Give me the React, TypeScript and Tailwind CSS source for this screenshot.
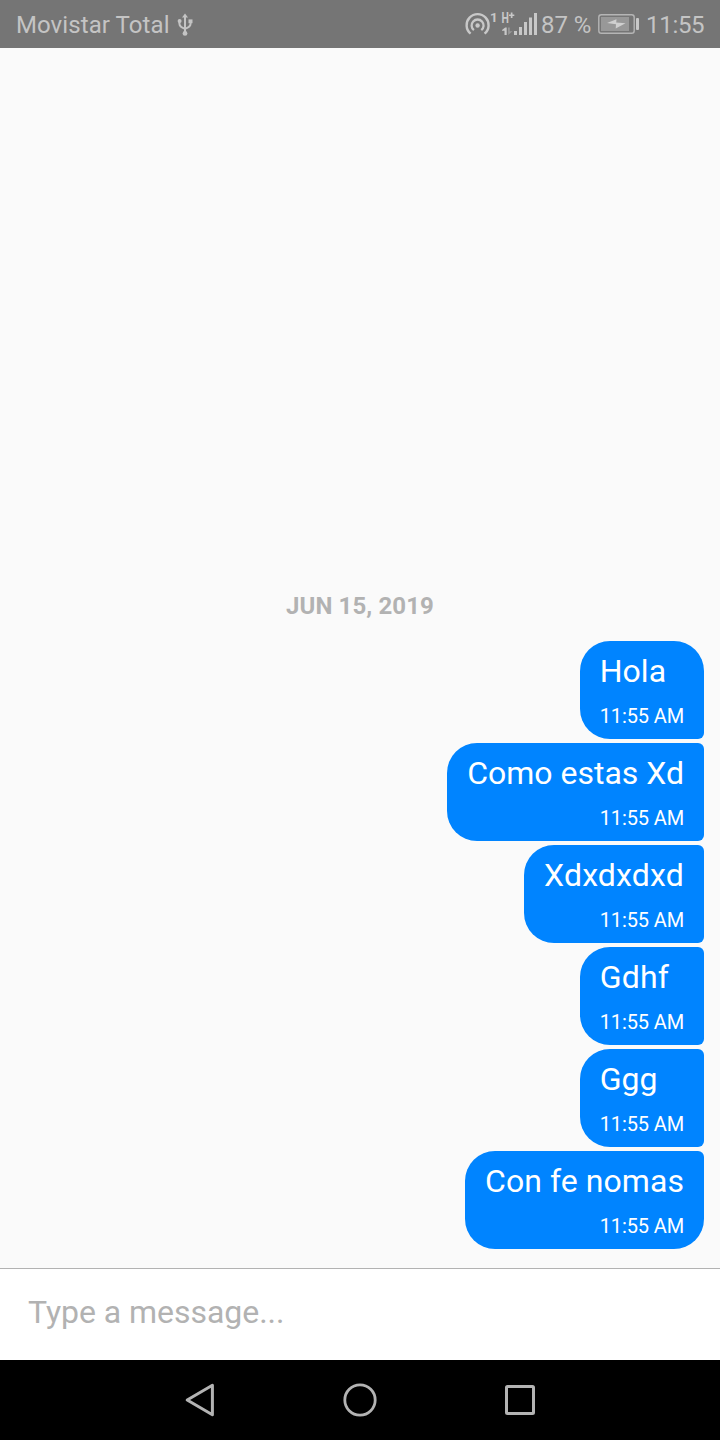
import React from "react";

type Message = { text: string; time: string; tracking: string };

const messages: Message[] = [
  { text: "Hola", time: "11:55 AM", tracking: "tracking-[0.06px]" },
  { text: "Como estas Xd", time: "11:55 AM", tracking: "tracking-[0px]" },
  { text: "Xdxdxdxd", time: "11:55 AM", tracking: "tracking-[0.17px]" },
  { text: "Gdhf", time: "11:55 AM", tracking: "tracking-[0.2px]" },
  { text: "Ggg", time: "11:55 AM", tracking: "tracking-[0.06px]" },
  { text: "Con fe nomas", time: "11:55 AM", tracking: "tracking-[0.06px]" },
];

function UsbIcon() {
  return (
    <svg className="ml-[7px] h-6 w-4" viewBox="0 0 16 24" fill="none" stroke="#c4c4c4" strokeWidth="2">
      <path d="M8 4v16M2.4 9v2.5c0 2.8 1.6 4 5.6 5.2 4-1.2 5.6-2.4 5.6-5.2V9" />
      <path d="M8 1.4l3 4.2H5z" fill="#c4c4c4" stroke="none" />
      <circle cx="2.6" cy="9" r="2" fill="#c4c4c4" stroke="none" />
      <rect x="11.5" y="7.4" width="4" height="3.8" fill="#c4c4c4" stroke="none" />
      <circle cx="8" cy="21.4" r="2.4" fill="#c4c4c4" stroke="none" />
    </svg>
  );
}

function SignalIcons() {
  return (
    <svg className="h-12 w-[78px] shrink-0" viewBox="462 0 78 48" fill="none" stroke="#c8c8c8">
      <path d="M470.6 33.6a11 11 0 1 1 14 0" strokeWidth="2.4" />
      <path d="M473.9 30.2a6 6 0 1 1 7.4 0" strokeWidth="2.3" />
      <circle cx="477.6" cy="25.5" r="2.2" fill="#c8c8c8" stroke="none" />
      <g fill="#c8c8c8" stroke="none" className="font-[Roboto,sans-serif]">
        <text x="490" y="22" fontSize="13.5" fontWeight="700">1</text>
        <text x="501.6" y="23" fontSize="14" fontWeight="700" textLength="7.4" lengthAdjust="spacingAndGlyphs">H</text>
        <path d="M509 14.4h1.8v-1.9h1.7v1.9h1.8V16h-1.8v1.9h-1.7V16H509z" />
        <path d="M502 30l3.2-2.6h1.5V35h-2.2v-4.2H502z" />
        <path d="M508 27.5h1.8v3.8h2.7L508.2 35z" fill="#999" />
        <rect x="514" y="31" width="3" height="4" />
        <rect x="519" y="27" width="3" height="8" />
        <rect x="524" y="22" width="3" height="13" />
        <rect x="529" y="17.5" width="3" height="17.5" />
        <rect x="534" y="13" width="3" height="22" />
      </g>
    </svg>
  );
}

function BatteryIcon() {
  return (
    <svg className="ml-[6px] h-12 w-[42px] shrink-0" viewBox="598 0 42 48">
      <rect x="598.8" y="14.7" width="35.4" height="18.6" rx="2.6" fill="none" stroke="#b5b5b5" strokeWidth="1.4" />
      <rect x="601" y="17" width="28" height="14" fill="#989898" />
      <path d="M607 23l9.5-3.8-.3 3.4 9.3.6-9.8 5.2.3-4.2z" fill="#d0d0d0" />
      <rect x="636" y="18" width="3" height="12" rx="1" fill="#c8c8c8" />
    </svg>
  );
}

function StatusBar() {
  return (
    <header className="flex h-12 items-center justify-between bg-[#757575] pl-4 text-2xl text-[#c4c4c4]">
      <div className="flex items-center">
        <span className="pt-0.5 tracking-[0.08px]">Movistar Total</span>
        <UsbIcon />
      </div>
      <div className="flex w-[258px] items-center whitespace-nowrap">
        <SignalIcons />
        <span className="w-[52px] shrink-0 pl-px pt-0.5 tracking-[-0.05px]">87 %</span>
        <BatteryIcon />
        <span className="ml-[6px] pt-0.5 tracking-[-0.3px]">11:55</span>
      </div>
    </header>
  );
}

function Bubble({ message, first, last }: { message: Message; first: boolean; last: boolean }) {
  const top = first ? "rounded-tr-[30px]" : "rounded-tr-[6px]";
  const bottom = last ? "rounded-br-[30px]" : "rounded-br-[6px]";
  return (
    <li className={`flex h-[98px] flex-col rounded-l-[30px] bg-[#0084ff] px-5 pt-2.5 text-white ${top} ${bottom}`}>
      <span className={`text-[32px] leading-10 ${message.tracking}`}>{message.text}</span>
      <time className="mt-[13px] self-end text-xl leading-6 tracking-[-0.12px]">{message.time}</time>
    </li>
  );
}

function NavigationBar() {
  return (
    <nav className="flex h-20 items-center justify-center gap-[120px] bg-black">
      <svg className="size-10" viewBox="0 0 40 40" fill="none" stroke="#b3b3b3" strokeWidth="3" strokeLinejoin="round">
        <path d="M7.2 20L32.4 5.2v29.6z" />
      </svg>
      <svg className="size-10" viewBox="0 0 40 40" fill="none" stroke="#b3b3b3" strokeWidth="2.8">
        <circle cx="20" cy="20" r="15.2" />
      </svg>
      <svg className="size-10" viewBox="0 0 40 40" fill="none" stroke="#b3b3b3" strokeWidth="3">
        <rect x="6.5" y="6.5" width="27" height="27" rx="1" />
      </svg>
    </nav>
  );
}

export default function App() {
  return (
    <div className="flex h-[1440px] w-[720px] flex-col overflow-hidden bg-[#fafafa] font-[Roboto,sans-serif]">
      <StatusBar />
      <main className="flex flex-1 flex-col justify-end pb-[19px]">
        <h2 className="mb-[19px] text-center text-2xl font-bold leading-8 tracking-[0.1px] text-[#b2b2b2]">JUN 15, 2019</h2>
        <ul className="flex flex-col items-end gap-1 pr-4">
          {messages.map((message, i) => (
            <Bubble key={i} message={message} first={i === 0} last={i === messages.length - 1} />
          ))}
        </ul>
      </main>
      <div className="flex h-[92px] items-center border-t border-[#b2b2b2] bg-white px-7">
        <input
          className="w-full bg-transparent pb-1.5 text-[32px] leading-10 tracking-[-0.04px] text-black outline-none placeholder:text-[#b2b2b2]"
          placeholder="Type a message..."
        />
      </div>
      <NavigationBar />
    </div>
  );
}
